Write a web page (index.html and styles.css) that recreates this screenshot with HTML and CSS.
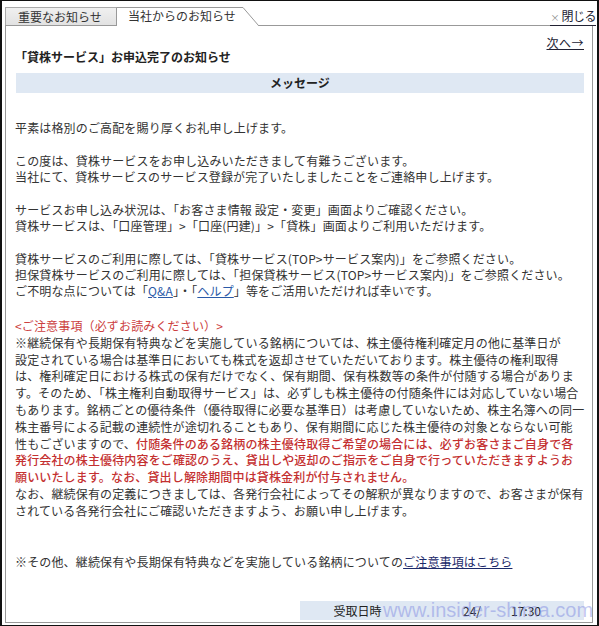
FILE: index.html
```html
<!DOCTYPE html>
<html lang="ja">
<head>
<meta charset="utf-8">
<title>お知らせ</title>
<link rel="stylesheet" href="styles.css">
</head>
<body>
<div class="window">
  <div class="tabbar">
    <div class="tab tab-off">重要なお知らせ</div>
    <div class="tab tab-on">
      <svg class="tab-shape" width="143" height="19" viewBox="0 0 143 19" aria-hidden="true">
        <polygon points="0.5,19 0.5,0.5 127,0.5 142.5,19" fill="#fff"/>
        <polyline points="0.5,19 0.5,0.5 127,0.5 142.5,18.5" fill="none" stroke="#999" stroke-width="1"/>
      </svg>
      <span class="tab-label">当社からのお知らせ</span>
    </div>
    <a class="close" href="#"><span class="close-x">×</span><span class="close-text">閉じる</span></a>
  </div>
  <div class="panel">
    <div class="nextrow"><a class="next" href="#">次へ→</a></div>
    <h1 class="title">「貸株サービス」お申込完了のお知らせ</h1>
    <div class="msgbar">メッセージ</div>
    <div class="body">
      <p>平素は格別のご高配を賜り厚くお礼申し上げます。</p>
      <p>この度は、貸株サービスをお申し込みいただきまして有難うございます。<br>当社にて、貸株サービスのサービス登録が完了いたしましたことをご連絡申し上げます。</p>
      <p>サービスお申し込み状況は、「お客さま情報 設定・変更」画面よりご確認ください。<br>貸株サービスは、「口座管理」&gt;「口座(円建)」&gt;「貸株」画面よりご利用いただけます。</p>
      <p class="guide">貸株サービスのご利用に際しては、「貸株サービス(TOP&gt;サービス案内)」をご参照ください。<br>担保貸株サービスのご利用に際しては、「担保貸株サービス(TOP&gt;サービス案内)」をご参照ください。<br>ご不明な点については「<a class="link" href="#">Q&amp;A</a>」・「<a class="link" href="#">ヘルプ</a>」等をご活用いただければ幸いです。</p>
      <p class="notice"><span class="red light">&lt;ご注意事項（必ずお読みください）&gt;</span><br>※継続保有や長期保有特典などを実施している銘柄については、株主優待権利確定月の他に基準日が<br>設定されている場合は基準日においても株式を返却させていただいております。株主優待の権利取得<br>は、権利確定日における株式の保有だけでなく、保有期間、保有株数等の条件が付随する場合がありま<br>す。そのため、「株主権利自動取得サービス」は、必ずしも株主優待の付随条件には対応していない場合<br>もあります。銘柄ごとの優待条件（優待取得に必要な基準日）は考慮していないため、株主名簿への同一<br>株主番号による記載の連続性が途切れることもあり、保有期間に応じた株主優待の対象とならない可能<br>性もございますので、<span class="red strong">付随条件のある銘柄の株主優待取得ご希望の場合には、必ずお客さまご自身で各<br>発行会社の株主優待内容をご確認のうえ、貸出しや返却のご指示をご自身で行っていただきますようお<br>願いいたします。なお、貸出し解除期間中は貸株金利が付与されません。</span><br>なお、継続保有の定義につきましては、各発行会社によってその解釈が異なりますので、お客さまが保有<br>されている各発行会社にご確認いただきますよう、お願い申し上げます。</p>
      <p class="other">※その他、継続保有や長期保有特典などを実施している銘柄についての<a class="link dark" href="#">ご注意事項はこちら</a></p>
    </div>
    <div class="footer">
      <div class="recv">
        <span class="recv-label">受取日時</span>
        <span class="recv-date">24/</span>
        <span class="recv-time">17:30</span>
      </div>
    </div>
  </div>
  <div class="watermark">www.insider-shima.com</div>
</div>
</body>
</html>
```

FILE: styles.css
```css
html, body {
  margin: 0;
  padding: 0;
  background: #fff;
}

body {
  font-family: "Noto Sans CJK JP", "Noto Sans", sans-serif;
  font-size: 12px;
  color: #333;
}

.window {
  position: relative;
  width: 599px;
  height: 626px;
  box-sizing: border-box;
  border: 1px solid #111;
  border-left-width: 2px;
  border-right-width: 2px;
  padding: 0 4px 2px 3px;
  display: flex;
  flex-direction: column;
  overflow: hidden;
}

.tabbar {
  height: 24px;
  display: flex;
  align-items: flex-end;
  position: relative;
  z-index: 2;
  flex: none;
}

.tab {
  height: 18px;
  box-sizing: border-box;
  line-height: 17px;
  font-size: 12px;
  color: #333;
}

.tab-off {
  width: 112px;
  padding-left: 12px;
  background: linear-gradient(#f0f0f0, #e2e2e2);
  border: 1px solid #aaa;
  border-bottom: none;
}

.tab-on {
  position: relative;
  width: 143px;
  height: 19px;
  margin-bottom: -1px;
  margin-left: -1px;
  padding-left: 12px;
}

.tab-shape {
  position: absolute;
  left: 0;
  top: 0;
}

.tab-label {
  position: relative;
}

.close {
  margin-left: auto;
  margin-right: -3px;
  align-self: center;
  margin-top: 8px;
  text-decoration: none;
  color: #223;
  line-height: 14px;
  border-bottom: 1px solid #223;
  display: flex;
  align-items: baseline;
  gap: 2px;
}

.close-x {
  color: #888;
  font-size: 9px;
}

.close-text {
  font-size: 12px;
  letter-spacing: -0.5px;
}

.panel {
  flex: 1;
  border: 1px solid #999;
  display: flex;
  flex-direction: column;
  padding: 0 8px 1px 10px;
  min-height: 0;
}

.nextrow {
  margin-top: 10px;
  display: flex;
  justify-content: flex-end;
  line-height: 14px;
}

.next {
  color: #223;
  text-decoration: underline;
  letter-spacing: 0.5px;
}

.title {
  margin: 0;
  font-size: 12px;
  font-weight: bold;
  line-height: 14px;
  color: #222;
  margin-left: -1px;
}

.msgbar {
  margin-top: 9px;
  height: 20px;
  line-height: 20px;
  background: #dfe8f3;
  text-align: center;
  font-weight: bold;
  color: #222;
}

.body {
  margin-top: 27px;
  margin-left: -1px;
  line-height: 16px;
  white-space: nowrap;
  letter-spacing: 0.15px;
}

.body p {
  margin: 0 0 17px 0;
}

.body p.guide {
  margin-bottom: 19px;
}

.body p.notice {
  line-height: 16.8px;
  margin-bottom: 0;
}

.red {
  color: #c43030;
}

.red.light {
  color: #cc4040;
}

.strong {
  font-weight: 500;
}

.link {
  color: #2a5aa8;
  text-decoration: underline;
}

.link.dark {
  color: #1c2a6a;
}

.body p.other {
  margin-top: 34px;
}

.footer {
  margin-top: auto;
  margin-bottom: 1px;
  display: flex;
  justify-content: flex-end;
}

.recv {
  width: 284px;
  height: 19px;
  line-height: 19px;
  background: #dfe8f3;
  display: flex;
  color: #222;
}

.recv-label {
  width: 115px;
  text-align: center;
}

.recv-date {
  margin-left: 48px;
  width: 48px;
}

.recv-time {
  width: 40px;
}

.watermark {
  position: absolute;
  left: 381px;
  top: 598px;
  font-family: "Liberation Sans", Arial, sans-serif;
  font-size: 20px;
  line-height: 22px;
  color: rgba(130, 140, 225, 0.5);
  pointer-events: none;
  white-space: nowrap;
}
```
